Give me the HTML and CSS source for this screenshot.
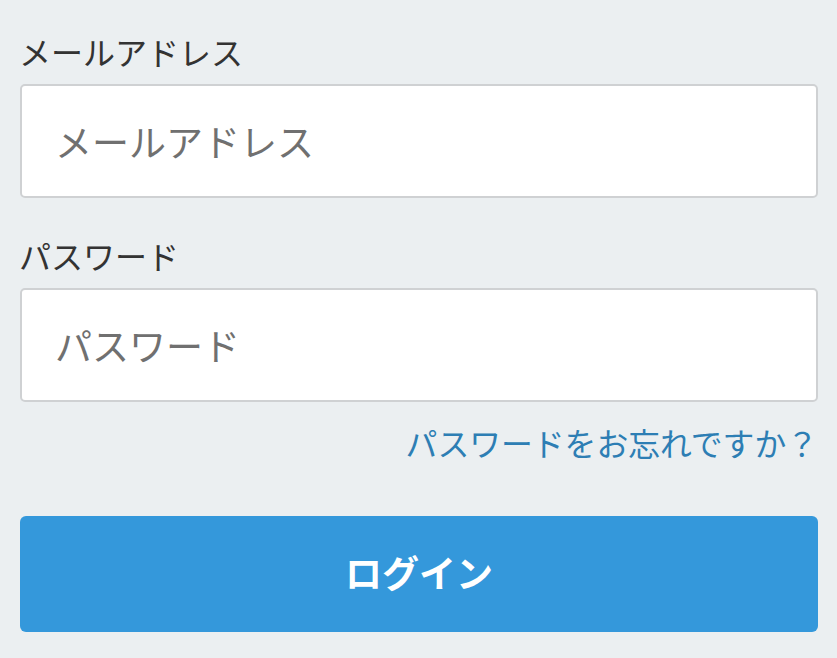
FILE: index.html
```html
<!DOCTYPE html>
<html lang="ja">
<head>
<meta charset="utf-8">
<title>ログイン</title>
<link rel="stylesheet" href="styles.css">
</head>
<body>
<form class="login-form">
  <label class="field-label" for="email">メールアドレス</label>
  <input class="text-input" id="email" type="email" placeholder="メールアドレス">
  <label class="field-label field-label--second" for="password">パスワード</label>
  <input class="text-input" id="password" type="password" placeholder="パスワード">
  <div class="forgot-row"><a class="forgot-link" href="#">パスワードをお忘れですか？</a></div>
  <button class="login-button" type="button">ログイン</button>
</form>
</body>
</html>
```

FILE: styles.css
```css
html, body {
  margin: 0;
  padding: 0;
  background: #ebeff1;
  font-family: "Noto Sans CJK JP", "Noto Sans", sans-serif;
}

.login-form {
  display: flex;
  flex-direction: column;
  padding: 27px 19px 0 20px;
}

.field-label {
  font-size: 32px;
  line-height: 48px;
  color: #333333;
  margin-bottom: 9px;
  margin-left: -1px;
}

.field-label--second {
  margin-top: 33px;
}

.text-input {
  box-sizing: border-box;
  height: 114px;
  border: 2px solid #cfd1d3;
  border-radius: 5px;
  background: #ffffff;
  padding: 0 0 0 33px;
  font-family: inherit;
  font-size: 37px;
  color: #333333;
  outline: none;
}

.text-input::placeholder {
  color: #707070;
}

.forgot-row {
  display: flex;
  justify-content: flex-end;
  margin-top: 16px;
  padding-right: 0;
}

.forgot-link {
  font-size: 31.8px;
  line-height: 48px;
  color: #2d7eb4;
  text-decoration: none;
}

.login-button {
  margin-top: 50px;
  height: 116px;
  border: none;
  border-radius: 6px;
  background: #3498db;
  color: #ffffff;
  font-family: inherit;
  font-size: 37px;
  font-weight: 700;
  padding: 0 0 4px;
}
```
